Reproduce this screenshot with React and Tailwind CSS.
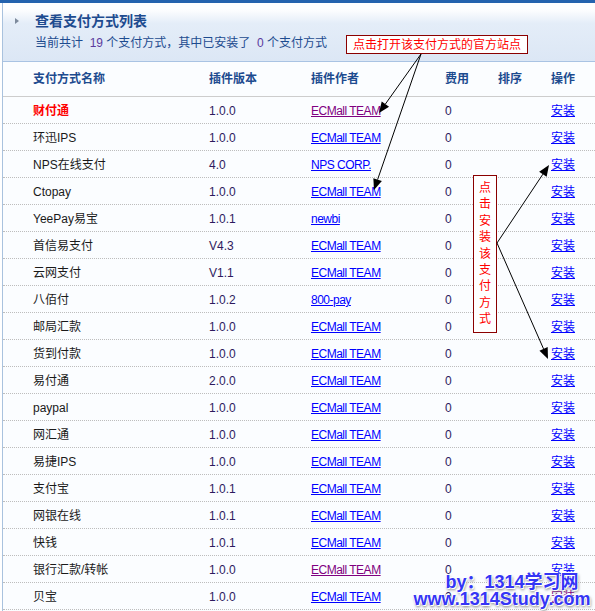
import React from "react";

const ROWS = [
  { name: "财付通", ver: "1.0.0", author: "ECMall TEAM", hot: true, visited: true },
  { name: "环迅IPS", ver: "1.0.0", author: "ECMall TEAM" },
  { name: "NPS在线支付", ver: "4.0", author: "NPS CORP." },
  { name: "Ctopay", ver: "1.0.0", author: "ECMall TEAM" },
  { name: "YeePay易宝", ver: "1.0.1", author: "newbi" },
  { name: "首信易支付", ver: "V4.3", author: "ECMall TEAM" },
  { name: "云网支付", ver: "V1.1", author: "ECMall TEAM" },
  { name: "八佰付", ver: "1.0.2", author: "800-pay" },
  { name: "邮局汇款", ver: "1.0.0", author: "ECMall TEAM" },
  { name: "货到付款", ver: "1.0.0", author: "ECMall TEAM" },
  { name: "易付通", ver: "2.0.0", author: "ECMall TEAM" },
  { name: "paypal", ver: "1.0.0", author: "ECMall TEAM" },
  { name: "网汇通", ver: "1.0.0", author: "ECMall TEAM" },
  { name: "易捷IPS", ver: "1.0.0", author: "ECMall TEAM" },
  { name: "支付宝", ver: "1.0.1", author: "ECMall TEAM" },
  { name: "网银在线", ver: "1.0.1", author: "ECMall TEAM" },
  { name: "快钱", ver: "1.0.1", author: "ECMall TEAM" },
  { name: "银行汇款/转帐", ver: "1.0.0", author: "ECMall TEAM", visited: true },
  { name: "贝宝", ver: "1.0.0", author: "ECMall TEAM", opVisited: true },
];

const COLS = "grid grid-cols-[176px_102px_134px_53px_53px_1fr]";

const Arrow = ({ x1, y1, x2, y2 }) => {
  const a = Math.atan2(y2 - y1, x2 - x1);
  const len = 11;
  const w = 4.5;
  const bx = x2 - len * Math.cos(a);
  const by = y2 - len * Math.sin(a);
  const px = -Math.sin(a) * w;
  const py = Math.cos(a) * w;
  return (
    <g>
      <line x1={x1} y1={y1} x2={bx} y2={by} stroke="#000" strokeWidth="1" />
      <polygon points={`${x2},${y2} ${bx + px},${by + py} ${bx - px},${by - py}`} fill="#000" />
    </g>
  );
};

export default function App() {
  return (
    <div className="relative w-[595px] h-[611px] overflow-hidden bg-white font-['Liberation_Sans','Noto_Sans_CJK_SC',sans-serif] text-[12px]">
      <div className="h-[3px] bg-[#2563ae]" />
      <div className="ml-[2px] border-l border-[#a9c2de] bg-[#fbfdff] h-[608px]">
        {/* panel head */}
        <div className="h-[59px] border-b border-[#a9c3e3] bg-gradient-to-b from-white via-[#e4edf8] to-[#dce7f5] from-[10%] via-[35%]">
          <div className="flex items-center h-[34px] pt-[1px]">
            <span className="ml-[12px] w-0 h-0 border-y-[3.5px] border-y-transparent border-l-[4px] border-l-[#7d8a9c]" />
            <span className="ml-[16px] text-[14px] font-bold text-[#1d4b8f] leading-none">查看支付方式列表</span>
          </div>
          <div className="ml-[32px] text-[#1d4b8f] leading-none whitespace-pre">
            当前共计  <span className="text-[#5b3a9e]">19</span> 个支付方式，其中已安装了  <span className="text-[#5b3a9e]">0</span> 个支付方式
          </div>
        </div>

        {/* table header */}
        <div className={`${COLS} h-[35px] items-center border-b border-[#cdcdcd] font-bold text-[#1d4b8f] pl-[30px] pb-[1px]`}>
          <span>支付方式名称</span>
          <span>插件版本</span>
          <span>插件作者</span>
          <span>费用</span>
          <span>排序</span>
          <span>操作</span>
        </div>

        {ROWS.map((r) => (
          <div
            key={r.name}
            className={`${COLS} h-[27px] items-center border-b border-dotted border-[#bdbdbd] pl-[30px] pt-[2px]`}
          >
            <span className={r.hot ? "text-[#ff0000] font-bold" : "text-[#1a1a1a]"}>{r.name}</span>
            <span className="text-[#2e1a5e]">{r.ver}</span>
            <span>
              <a
                href="#"
                className={`underline tracking-[-0.5px] ${r.visited ? "text-[#800080]" : "text-[#0000ff]"}`}
              >
                {r.author}
              </a>
            </span>
            <span className="text-[#2e1a5e]">0</span>
            <span />
            <span>
              <a href="#" className={`underline ${r.opVisited ? "text-[#800080]" : "text-[#0000ff]"}`}>
                安装
              </a>
            </span>
          </div>
        ))}
      </div>

      {/* annotation: open site */}
      <div className="absolute left-[346px] top-[35px] w-[182px] h-[19px] border border-[#8b0000] bg-white text-[#ff0000] flex items-center justify-center leading-none">
        点击打开该支付方式的官方站点
      </div>

      {/* annotation: install */}
      <div className="absolute left-[473px] top-[175px] w-[24px] h-[158px] border border-[#8b0000] bg-white text-[#ff0000] flex flex-col items-center pt-[4px] leading-[16.4px]">
        {"点击安装该支付方式".split("").map((c, i) => (
          <span key={i}>{c}</span>
        ))}
      </div>

      <svg className="absolute left-0 top-0 pointer-events-none" width="595" height="611">
        <Arrow x1={421} y1={54} x2={379} y2={113} />
        <Arrow x1={421} y1={54} x2={374} y2={190} />
        <Arrow x1={497} y1={243} x2={549} y2={165} />
        <Arrow x1={497} y1={243} x2={548} y2={359} />
      </svg>

      {/* watermark */}
      <div className="absolute left-[412px] top-[574px] w-[180px] flex flex-col items-center font-bold text-[18px] leading-[17px] text-[#3535f5] [text-shadow:0_0_1px_#fff,1px_1px_0_#fff,-1px_-1px_0_#fff,1px_2px_3px_#777]">
        <span className="pl-[20px] whitespace-pre">by：1314学习网</span>
        <span>www.1314Study.com</span>
      </div>
    </div>
  );
}
